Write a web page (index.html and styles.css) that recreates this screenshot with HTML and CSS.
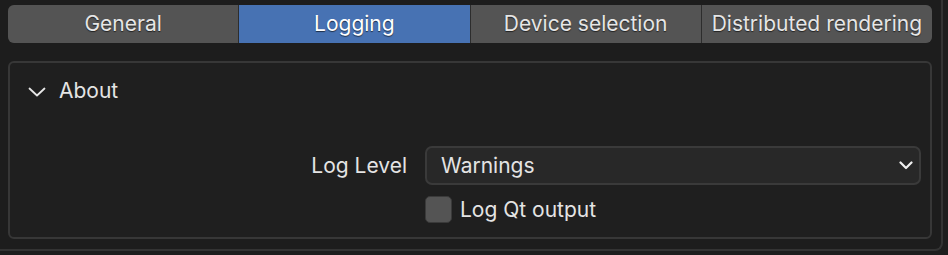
FILE: index.html
```html
<!DOCTYPE html>
<html>
<head>
<meta charset="utf-8">
<link rel="stylesheet" href="styles.css">
</head>
<body>
<div class="frame">
  <div class="tabs">
    <div class="tab">General</div>
    <div class="tab active">Logging</div>
    <div class="tab">Device selection</div>
    <div class="tab">Distributed rendering</div>
  </div>
  <div class="panel">
    <div class="panel-header">
      <svg class="chev" width="18" height="10" viewBox="0 0 18 10"><path d="M1.5 1.5 L9 8.5 L16.5 1.5" fill="none" stroke="#e6e6e6" stroke-width="1.8" stroke-linecap="round" stroke-linejoin="round"/></svg>
      <span>About</span>
    </div>
    <div class="props">
      <div class="label">Log Level</div>
      <div class="dropdown">
        <span>Warnings</span>
        <svg width="14" height="9" viewBox="0 0 14 9"><path d="M1.5 1.5 L7 7 L12.5 1.5" fill="none" stroke="#f0f0f0" stroke-width="2.2" stroke-linecap="round" stroke-linejoin="round"/></svg>
      </div>
      <div class="label"></div>
      <label class="check"><span class="box"></span><span>Log Qt output</span></label>
    </div>
  </div>
</div>
</body>
</html>
```
FILE: styles.css
```css
html, body {
  margin: 0;
  padding: 0;
  background: #1d1d1d;
  overflow: hidden;
}
body {
  width: 948px;
  height: 255px;
  font-family: Inter, "Noto Sans", sans-serif;
  font-size: 21px;
  color: #e4e4e4;
}
.frame {
  width: 933px;
  height: 244px;
  padding: 5px 0 0 8px;
  border-right: 2px solid #333333;
  border-bottom: 2px solid #333333;
  border-bottom-right-radius: 8px;
  box-sizing: content-box;
}
.tabs {
  display: flex;
  gap: 1px;
  width: 924px;
  height: 38px;
  background: #2d2d2d;
  border-radius: 6px;
  overflow: hidden;
}
.tab {
  flex: 1;
  display: flex;
  align-items: center;
  justify-content: center;
  background: #545454;
  color: #e6e6e6;
  text-shadow: 0 1px 1px rgba(0,0,0,0.6);
  padding-bottom: 1px;
}
.tab.active {
  background: #4772b3;
  color: #ffffff;
}
.panel {
  margin-top: 18px;
  width: 924px;
  height: 178px;
  box-sizing: border-box;
  border: 2px solid #373737;
  border-radius: 6px;
  background: #1f1f1f;
}
.panel-header {
  display: flex;
  align-items: center;
  height: 55px;
  padding-left: 18px;
  gap: 13px;
}
.chev { margin-top: 2px; }
.props {
  display: grid;
  grid-template-columns: 397px 496px;
  column-gap: 18px;
  row-gap: 11px;
  margin-top: 28px;
}
.label {
  text-align: right;
  align-self: center;
  color: #e4e4e4;
}
.dropdown {
  height: 39px;
  box-sizing: border-box;
  border: 2px solid #3a3a3a;
  border-radius: 7px;
  background: #282828;
  display: flex;
  align-items: center;
  justify-content: space-between;
  padding: 0 6px 0 14px;
}
.check {
  display: flex;
  align-items: center;
  gap: 8px;
  height: 27px;
}
.box {
  width: 27px;
  height: 27px;
  box-sizing: border-box;
  background: #545454;
  border: 1px solid #3a3a3a;
  border-radius: 5px;
}
```
